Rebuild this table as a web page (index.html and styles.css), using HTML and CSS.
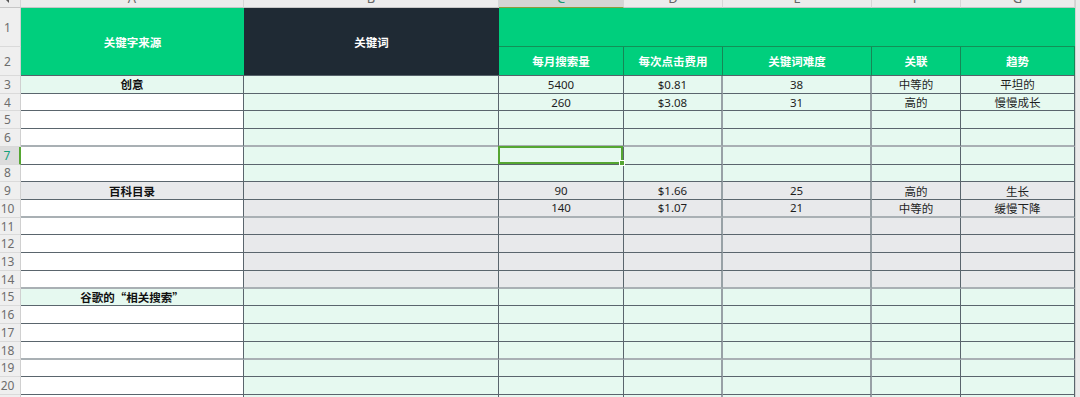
FILE: index.html
```html
<!DOCTYPE html>
<html lang="zh-CN">
<head>
<meta charset="utf-8">
<title>关键词表</title>
<link rel="stylesheet" href="styles.css">
</head>
<body>
<div class="sheet">
  <div class="vscroll"></div>

  <div class="ch corner"><span class="tri"></span></div>
  <div class="ch"><span>A</span></div>
  <div class="ch"><span>B</span></div>
  <div class="ch on"><span>C</span></div>
  <div class="ch"><span>D</span></div>
  <div class="ch"><span>E</span></div>
  <div class="ch"><span>F</span></div>
  <div class="ch"><span>G</span></div>

  <div class="rn">1</div>
  <div class="h ha">关键字来源</div>
  <div class="h hb">关键词</div>
  <div class="h hc"></div>

  <div class="rn">2</div>
  <div class="h hs">每月搜索量</div>
  <div class="h hs">每次点击费用</div>
  <div class="h hs">关键词难度</div>
  <div class="h hs">关联</div>
  <div class="h hs">趋势</div>

  <div class="row mint full">
    <div class="rn">3</div><div class="c a b">创意</div><div class="c"></div><div class="c">5400</div><div class="c">$0.81</div><div class="c">38</div><div class="c">中等的</div><div class="c">平坦的</div>
  </div>
  <div class="row mint">
    <div class="rn">4</div><div class="c a"></div><div class="c"></div><div class="c">260</div><div class="c">$3.08</div><div class="c">31</div><div class="c">高的</div><div class="c">慢慢成长</div>
  </div>
  <div class="row mint">
    <div class="rn">5</div><div class="c a"></div><div class="c"></div><div class="c"></div><div class="c"></div><div class="c"></div><div class="c"></div><div class="c"></div>
  </div>
  <div class="row mint t">
    <div class="rn">6</div><div class="c a"></div><div class="c"></div><div class="c"></div><div class="c"></div><div class="c"></div><div class="c"></div><div class="c"></div>
  </div>
  <div class="row mint">
    <div class="rn on">7</div><div class="c a"></div><div class="c"></div><div class="c sel"></div><div class="c"></div><div class="c"></div><div class="c"></div><div class="c"></div>
  </div>
  <div class="row mint">
    <div class="rn">8</div><div class="c a"></div><div class="c"></div><div class="c"></div><div class="c"></div><div class="c"></div><div class="c"></div><div class="c"></div>
  </div>
  <div class="row grey full">
    <div class="rn">9</div><div class="c a b">百科目录</div><div class="c"></div><div class="c">90</div><div class="c">$1.66</div><div class="c">25</div><div class="c">高的</div><div class="c">生长</div>
  </div>
  <div class="row grey t">
    <div class="rn">10</div><div class="c a"></div><div class="c"></div><div class="c">140</div><div class="c">$1.07</div><div class="c">21</div><div class="c">中等的</div><div class="c">缓慢下降</div>
  </div>
  <div class="row grey">
    <div class="rn">11</div><div class="c a"></div><div class="c"></div><div class="c"></div><div class="c"></div><div class="c"></div><div class="c"></div><div class="c"></div>
  </div>
  <div class="row grey">
    <div class="rn">12</div><div class="c a"></div><div class="c"></div><div class="c"></div><div class="c"></div><div class="c"></div><div class="c"></div><div class="c"></div>
  </div>
  <div class="row grey">
    <div class="rn">13</div><div class="c a"></div><div class="c"></div><div class="c"></div><div class="c"></div><div class="c"></div><div class="c"></div><div class="c"></div>
  </div>
  <div class="row grey t">
    <div class="rn">14</div><div class="c a"></div><div class="c"></div><div class="c"></div><div class="c"></div><div class="c"></div><div class="c"></div><div class="c"></div>
  </div>
  <div class="row mint full">
    <div class="rn">15</div><div class="c a b cjk">谷歌的“相关搜索”</div><div class="c"></div><div class="c"></div><div class="c"></div><div class="c"></div><div class="c"></div><div class="c"></div>
  </div>
  <div class="row mint">
    <div class="rn">16</div><div class="c a"></div><div class="c"></div><div class="c"></div><div class="c"></div><div class="c"></div><div class="c"></div><div class="c"></div>
  </div>
  <div class="row mint">
    <div class="rn">17</div><div class="c a"></div><div class="c"></div><div class="c"></div><div class="c"></div><div class="c"></div><div class="c"></div><div class="c"></div>
  </div>
  <div class="row mint t">
    <div class="rn">18</div><div class="c a"></div><div class="c"></div><div class="c"></div><div class="c"></div><div class="c"></div><div class="c"></div><div class="c"></div>
  </div>
  <div class="row mint">
    <div class="rn">19</div><div class="c a"></div><div class="c"></div><div class="c"></div><div class="c"></div><div class="c"></div><div class="c"></div><div class="c"></div>
  </div>
  <div class="row mint">
    <div class="rn">20</div><div class="c a"></div><div class="c"></div><div class="c"></div><div class="c"></div><div class="c"></div><div class="c"></div><div class="c"></div>
  </div>
  <div class="row mint">
    <div class="rn">21</div><div class="c a"></div><div class="c"></div><div class="c"></div><div class="c"></div><div class="c"></div><div class="c"></div><div class="c"></div>
  </div>
</div>
</body>
</html>
```
FILE: styles.css
```css
* { box-sizing: border-box; margin: 0; padding: 0; }

html, body {
  width: 1080px;
  height: 397px;
  overflow: hidden;
  background: #ffffff;
}

body {
  font-family: "Noto Sans", "Noto Sans CJK SC", sans-serif;
  color: #1e1e1e;
}

.sheet {
  display: grid;
  grid-template-columns: 21px 223px 255px 125px 99px 149px 89px 114px 5px;
  grid-template-rows: 8px 39px 29px repeat(19, 17.72px);
}

.vscroll {
  grid-column: 9;
  grid-row: 1 / -1;
  background: #ebebeb;
  border-left: 1px solid #d2d2d2;
}

/* column letters (scrolled, only lower part visible) */
.ch {
  background: #ececec;
  border-right: 1px solid #d6d6d6;
  border-bottom: 1px solid #c6c6c6;
  display: flex;
  align-items: flex-end;
  justify-content: center;
  padding-bottom: 2px;
  overflow: hidden;
  font-size: 13px;
  line-height: 14px;
  color: #666;
}
.ch.on {
  background: #d5d5d5;
  color: #1a9a72;
  border-bottom-color: #8f9a3e;
}
.corner {
  justify-content: flex-start;
  align-items: flex-start;
  padding: 0 0 0 6px;
}
.tri {
  display: block;
  width: 0;
  height: 0;
  border-left: 3px solid transparent;
  border-top: 3px solid #555;
}

/* row numbers */
.rn {
  background: #efefef;
  color: #6d6d6d;
  font-size: 12px;
  display: flex;
  align-items: center;
  justify-content: center;
  padding-right: 5px;
  border-bottom: 1px solid #dadada;
  border-right: 1px solid #d0d0d0;
}
.rn.on {
  background: #dcdcdc;
  color: #15a07a;
  border-right: 2px solid #55a632;
}

/* header block */
.h {
  display: flex;
  align-items: center;
  justify-content: center;
  color: #ffffff;
  font-weight: 700;
  font-size: 11.5px;
  background: #00cf7d;
  border-bottom: 1px solid #56626a;
}
.ha { grid-row: span 2; }
.hb { grid-row: span 2; background: #1f2a34; }
.hc { grid-column: span 5; border-bottom: 1px solid #129158; }
.hs { border-right: 1px solid #178656; }

/* body cells */
.row { display: contents; }
.mint { --bg: #e6f9f0; }
.grey { --bg: #e8e9eb; }

.c {
  background: var(--bg);
  display: flex;
  align-items: center;
  justify-content: center;
  font-size: 11.5px;
  color: #1e1e1e;
  border-right: 1px solid #5a656d;
  border-bottom: 1px solid #5a656d;
  white-space: nowrap;
}
.row .a { background: #ffffff; }
.row.full .a { background: var(--bg); }
.b { font-weight: 700; color: #111; }
.cjk { font-family: "Noto Sans CJK SC", sans-serif; }

.row > .c:nth-child(5),
.row > .c:nth-child(6) {
  border-right: 2px solid #98a1a6;
}
.row.t > .c {
  border-bottom: 2px solid #a9b0b4;
}

.sel { position: relative; }
.sel::after {
  content: "";
  position: absolute;
  top: -1px;
  left: -1px;
  right: 0;
  bottom: 0;
  border: 2px solid #55a632;
}
.sel::before {
  content: "";
  position: absolute;
  right: -2px;
  bottom: -2px;
  width: 4px;
  height: 4px;
  background: #55a632;
  border: 1px solid #ffffff;
  z-index: 1;
}
```
